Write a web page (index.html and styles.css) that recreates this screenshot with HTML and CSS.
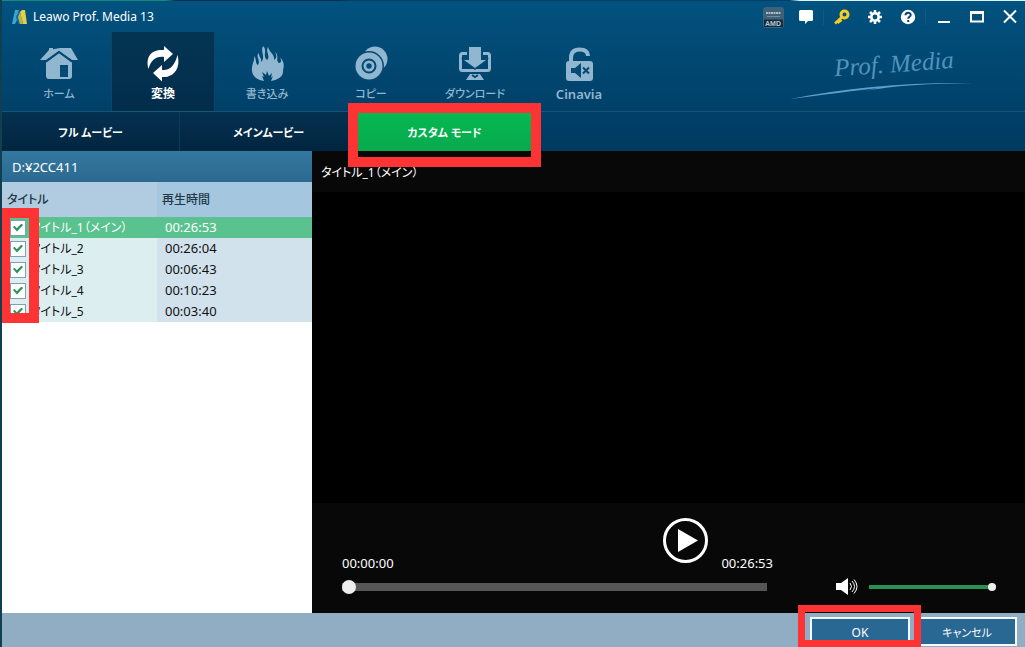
FILE: index.html
```html
<!DOCTYPE html>
<html lang="ja">
<head>
<meta charset="utf-8">
<title>Leawo Prof. Media 13</title>
<link rel="stylesheet" href="styles.css">
</head>
<body>
<div class="app">
  <header class="header">
    <div class="titlebar">
      <svg class="logo" width="16" height="16" viewBox="0 0 16 16" aria-hidden="true"><path d="M3 1h4v6L3 15H0z" fill="#39a6cf"/><path d="M7 1l3 9-2 5H6L4 8z" fill="#146a9c"/><path d="M8 3l2-2h3l2 14h-4z" fill="#e3cf45"/><path d="M8 3l3 12H8L6 8z" fill="#b5b84d"/></svg>
      <h1 class="app-name">Leawo Prof. Media 13</h1>
      <div class="tools">
        <svg class="gpu" width="21" height="21" viewBox="0 0 21 21" role="img" aria-label="AMD"><rect x=".5" y=".5" width="20" height="20" rx="2" fill="#294a61" stroke="#3d6379"/><path d="M1 1h19v11H1z" fill="#3f6075"/><path d="M3 6h15" stroke="#a9bcc8" stroke-width="2" stroke-dasharray="2 .5"/><path d="M4 9.500h13" stroke="#6f8fa1"/><path d="M1 13h19v7H1z" fill="#102b40"/><text x="2" y="19" class="gpu-text">AMD</text></svg>
        <button class="tool" aria-label="メッセージ"><svg width="16" height="16" viewBox="0 0 16 16"><path d="M2.500 1h11a1.500 1.500 0 0 1 1.500 1.500v8a1.500 1.500 0 0 1-1.500 1.500H10l-3 3v-3H2.500A1.500 1.500 0 0 1 1 10.500v-8A1.500 1.500 0 0 1 2.500 1z" fill="#fff"/></svg></button>
        <span class="divider"></span>
        <button class="tool" aria-label="登録"><svg width="16" height="16" viewBox="0 0 16 16"><g fill="none" stroke="#f4cf23"><circle cx="10.500" cy="5.500" r="3.500" stroke-width="3"/><path d="M8 8l-7 6.500M3.500 12l2 2M5.500 10.500l2 2" stroke-width="2.500"/></g></svg></button>
        <button class="tool" aria-label="設定"><svg width="16" height="16" viewBox="0 0 16 16"><g stroke="#fff" stroke-width="2.500"><path d="M8 1v3M8 12v3M1 8h3M12 8h3M3 3l2 2M11 11l2 2M13 3l-2 2M5 11l-2 2"/></g><circle cx="8" cy="8" r="3.700" fill="none" stroke="#fff" stroke-width="2.600"/></svg></button>
        <button class="tool" aria-label="ヘルプ"><svg width="16" height="16" viewBox="0 0 16 16"><circle cx="8" cy="8" r="7.200" fill="#fff"/><path d="M5.500 6.300C5.500 3 10.700 3 10.700 6c0 1.800-2.500 1.800-2.500 3.800" fill="none" stroke="#07466e" stroke-width="2"/><path d="M7.200 11h2v2h-2z" fill="#07466e"/></svg></button>
        <span class="divider"></span>
        <button class="tool" aria-label="最小化"><svg width="16" height="16" viewBox="0 0 16 16"><path d="M2 13h12" stroke="#fff" stroke-width="2"/></svg></button>
        <button class="tool" aria-label="最大化"><svg width="16" height="16" viewBox="0 0 16 16"><path d="M2 3.500h12v9H2z" fill="none" stroke="#fff" stroke-width="2"/><path d="M1 3.500h14" stroke="#fff" stroke-width="3"/></svg></button>
        <button class="tool" aria-label="閉じる"><svg width="16" height="16" viewBox="0 0 16 16"><path d="M2 1.500l12 12M14 1.500l-12 12" stroke="#fff" stroke-width="2"/></svg></button>
      </div>
    </div>

    <div class="main-bar">
      <nav class="main-nav">
        <a class="nav-item" href="#home"><svg width="40" height="36" viewBox="0 0 40 36"><path d="M1 14L10 4l11-2h11l7 12h-6L20 5 7 14z"/><path d="M10 2h4v6l-4 2z"/><path d="M20 7l13 9.500V30q0 3-3 3H10q-3 0-3-3V16.500z"/><path d="M7 15.500L20 6l13 9.500" fill="none" class="thin"/><path d="M21 19h8v12h-8z" class="hole"/></svg><span>ホーム</span></a>
        <a class="nav-item active" href="#convert" aria-current="page"><svg width="40" height="36" viewBox="0 0 40 36"><path d="M5.500 23C2 10 9 3 21 4V0l9 8-9 8v-5C13 10 8 14 5.500 23z"/><path d="M34.500 9C38 22 31 32 19 31v4.500L10 27l9-8v5C27 25 32 19 34.500 9z"/></svg><span>変換</span></a>
        <a class="nav-item" href="#burn"><svg width="40" height="36" viewBox="0 0 40 36"><path d="M16 0c5 5-1 9 4 14 4-4-2-8 1-13 1 5 7 7 6 13 3-2 3-4 1-8 5 4 0 8 4 11 3 0 2-4 1-6 6 7 3 10 3 15 0 5-6 8-12 9l2-5-2 2 1-5-3 3-2-5-1 4-4-3 2 5-2-1 2 5c-9-1-13-7-12-13 0-5 3-7 2-12 3 3 1 8 4 9 3-5-3-8 1-12 0 5 3 5 2 9 5-5-1-10 2-16z"/></svg><span>書き込み</span></a>
        <a class="nav-item" href="#copy"><svg width="40" height="36" viewBox="0 0 40 36"><circle cx="24" cy="13" r="12.500"/><circle cx="18" cy="20" r="15" class="hole"/><circle cx="18" cy="20" r="13.500"/><circle cx="18" cy="20" r="6.500" fill="none" class="ring"/><circle cx="18" cy="20" r="2.700" class="hole"/></svg><span>コピー</span></a>
        <a class="nav-item" href="#download"><svg width="40" height="36" viewBox="0 0 40 36"><rect x="5.500" y="7.500" width="29" height="17" rx="2" fill="none" class="frame"/><path d="M12 0h16v12h6L20 24 6 12h6z" class="hole"/><path d="M14 1h12v13h5L20 22 9 14h5z"/><path d="M15 28h10l4 6H11z"/><path d="M17 29l3 2 3-2" fill="none" class="thin"/></svg><span>ダウンロード</span></a>
        <a class="nav-item" href="#cinavia"><svg width="40" height="36" viewBox="0 0 40 36"><path d="M12 17V12q0-8.500 8.500-8.500T29 10" fill="none" class="shackle"/><rect x="7" y="15" width="27" height="20" rx="3"/><path d="M12 22h4l6-5v15l-6-5h-4z" class="hole"/><path d="M24 21.500l6 6M30 21.500l-6 6" class="cross"/></svg><span class="latin">Cinavia</span></a>
      </nav>
      <div class="brand">
        <span class="brand-name">Prof. Media</span>
        <svg class="swoosh" width="186" height="20" viewBox="0 0 186 20" aria-hidden="true"><path d="M1 18C60 6 120 1 184 2 130 3 100 5 65 12L90 7C60 10 35 14 1 18z" fill="#5b9fcf"/></svg>
      </div>
    </div>

    <nav class="mode-nav">
      <button class="mode">フル ムービー</button>
      <button class="mode">メインムービー</button>
      <div class="mode-wrap">
        <button class="mode selected" aria-pressed="true">カスタム モード</button>
        <span class="mark mark-mode"></span>
      </div>
    </nav>
  </header>

  <main class="content">
    <section class="list-pane">
      <h2 class="path">D:¥2CC411</h2>
      <div class="table-wrap">
        <table class="titles">
          <thead><tr><th>タイトル</th><th>再生時間</th></tr></thead>
          <tbody>
            <tr class="current"><td><label><input type="checkbox" checked>タイトル_1（メイン）</label></td><td>00:26:53</td></tr>
            <tr><td><label><input type="checkbox" checked>タイトル_2</label></td><td>00:26:04</td></tr>
            <tr><td><label><input type="checkbox" checked>タイトル_3</label></td><td>00:06:43</td></tr>
            <tr><td><label><input type="checkbox" checked>タイトル_4</label></td><td>00:10:23</td></tr>
            <tr><td><label><input type="checkbox" checked>タイトル_5</label></td><td>00:03:40</td></tr>
          </tbody>
        </table>
        <span class="mark mark-checks"></span>
      </div>
    </section>

    <section class="player">
      <h2 class="video-title">タイトル_1（メイン）</h2>
      <div class="video"></div>
      <div class="controls">
        <div class="timeline">
          <div class="times">
            <span class="time">00:00:00</span>
            <button class="play" aria-label="再生"><svg width="45" height="45" viewBox="0 0 45 45"><circle cx="22.500" cy="22.500" r="21" fill="none" stroke="#fff" stroke-width="3"/><path d="M15 11l20 11.500L15 34z" fill="#fff"/></svg></button>
            <span class="time">00:26:53</span>
          </div>
          <input class="seek" type="range" min="0" max="1613" value="0" aria-label="再生位置">
        </div>
        <div class="sound">
          <svg width="22" height="18" viewBox="0 0 22 18" aria-hidden="true"><path d="M0 5h5l7-5v17l-7-5H0z" fill="#fff"/><path d="M14 5q3 3.500 0 7M16 3q5 5.500 0 11M18 1.500q6 7 0 14" fill="none" stroke="#fff"/></svg>
          <input class="volume" type="range" min="0" max="100" value="100" aria-label="音量">
        </div>
      </div>
    </section>
  </main>

  <footer class="footer">
    <div class="ok-wrap">
      <button class="action">OK</button>
      <span class="mark mark-ok"></span>
    </div>
    <button class="action">キャンセル</button>
  </footer>
</div>
</body>
</html>
```
FILE: styles.css
```css
* { box-sizing: border-box; }

body {
  margin: 0;
  font-family: "Noto Sans", "Noto Sans CJK JP", sans-serif;
  font-size: 13px;
  line-height: 16px;
  font-feature-settings: "palt";
  background: #fff;
}

button {
  font: inherit;
  font-feature-settings: inherit;
  color: inherit;
  background: none;
  border: 0;
  padding: 0;
}

h1, h2 { margin: 0; font-size: 13px; font-weight: 400; }

.app {
  display: flex;
  flex-direction: column;
  min-height: 100vh;
  border-left: 2px solid #104050;
  overflow: hidden;
}

/* Header */
.header { color: #fff; background: linear-gradient(#02527f, #003a60); }

.titlebar {
  display: flex;
  align-items: center;
  height: 32px;
  padding: 2px 7px 0 10px;
  background: linear-gradient(90deg, #178a78 16%, #022f50 17% 33%, #033f63 34% 77%, #d7f6fb 78%) top / 100% 1px no-repeat;
  border-top: 0;
}
.app-name { margin-left: 5px; font-size: 12px; }
.tools { display: flex; align-items: center; margin-left: auto; }
.gpu { margin-right: 14px; }
.gpu-text { font: bold 7px "Liberation Sans", sans-serif; fill: #b9cbd8; }
.tool { display: flex; margin-right: 17px; }
.tool:last-child { margin-right: 0; }
.divider { width: 1px; height: 16px; margin: 0 10px 0 -8px; background: #1c5680; }

.main-bar { display: flex; justify-content: space-between; border-bottom: 1px solid #175476; }
.main-nav { display: flex; padding-left: 5px; }
.nav-item {
  display: flex;
  flex-direction: column;
  align-items: center;
  gap: 4px;
  width: 104px;
  height: 79px;
  padding-top: 14px;
  font-size: 11px;
  font-weight: 500;
  color: #91b6cf;
  text-decoration: none;
}
.nav-item svg { fill: #91b6cf; }
.nav-item.active { font-size: 12px; color: #fff; font-weight: 700; background: linear-gradient(#033553, #022d4b); border: solid #0b4568; border-width: 0 1px; }
.nav-item.active svg { fill: #fff; }
.nav-item .latin { font-size: 13px; font-weight: 600; }
.nav-item .hole { fill: #034a74; }
.ring { stroke: #034a74; stroke-width: 2; }
.frame { stroke: #91b6cf; stroke-width: 3; }
.thin { stroke: #034a74; stroke-width: 2; }
.shackle { stroke: #91b6cf; stroke-width: 4; }
.cross { stroke: #034a74; stroke-width: 2; }

.brand { display: flex; flex-direction: column; align-items: center; padding: 19px 50px 0 0; }
.brand-name {
  padding-left: 24px;
  font-family: "Liberation Serif", serif;
  font-size: 25px;
  line-height: 28px;
  font-style: italic;
  color: #5293bd;
  transform: rotate(-4deg);
}
.swoosh { margin-top: 2px; }

.mode-nav { display: flex; height: 39px; }
.mode {
  width: 178px;
  padding-top: 2px;
  font-size: 11px;
  font-weight: 700;
  background: linear-gradient(#043150, #022540);
  border-right: 1px solid #0b3d5d;
}
.mode-wrap { position: relative; display: flex; }
.mode.selected { width: 173px; background: linear-gradient(#05b950, #08a94e); border: 0; }

/* Highlight frames drawn over the window */
.mark { position: absolute; border: 10px solid #fe3334; pointer-events: none; }
.mark-mode { inset: -9px -10px -16px -10px; }
.mark-checks { top: 26px; left: -2px; width: 39px; height: 115px; }
.mark-ok { inset: -12px -11px -1px -12px; border-width: 7px; }

/* Title list */
.content { display: flex; flex: 1; }
.list-pane { width: 310px; background: #fff; }
.path { padding: 8px 10px 7px; color: #fff; background: linear-gradient(#34789f, #2c6990); }
.table-wrap { position: relative; }
.titles { width: 100%; border-collapse: collapse; table-layout: fixed; color: #111; }
.titles th { height: 35px; padding: 0 5px; text-align: left; font-size: 12px; font-weight: 500; color: #223847; background: #a4c7df; }
.titles th:first-child { background: #b1cce1; }
.titles td { height: 21px; padding: 0 8px 2px; background: #d2e2ed; }
.titles td:first-child { padding-bottom: 0; background: #dceeef; font-size: 12px; white-space: nowrap; }
.titles .current td, .titles .current td:first-child { color: #fff; background: #59c28e; }
.titles label { display: flex; align-items: center; gap: 4px; }
.titles input {
  appearance: none;
  display: grid;
  place-items: center;
  width: 16px;
  height: 16px;
  margin: 0;
  border: 1px solid #7d9fba;
  background: #fff;
}
.titles input:checked::before {
  content: "";
  width: 10px;
  height: 8px;
  background: #28955a;
  clip-path: polygon(0 45%, 15% 28%, 38% 58%, 85% 0, 100% 18%, 40% 100%);
}

/* Player */
.player { display: flex; flex: 1; flex-direction: column; color: #fff; background: #080808; }
.video-title { padding: 14px 9px 11px; font-size: 12px; }
.video { flex: 1; background: #000; }
.controls { display: flex; align-items: flex-end; gap: 63px; padding: 15px 29px 19px 30px; }
.timeline { display: flex; flex: 1; flex-direction: column; gap: 9px; }
.times { display: flex; align-items: flex-end; gap: 13px; height: 53px; }
.play { display: flex; align-self: flex-start; margin-left: auto; }
.sound { display: flex; align-items: center; gap: 11px; height: 14px; }

input[type="range"] { appearance: none; margin: 0; background: transparent; }
.seek { width: calc(100% - 6px); height: 14px; }
.seek::-webkit-slider-runnable-track { height: 8px; background: #565656; }
.seek::-webkit-slider-thumb { appearance: none; width: 14px; height: 14px; margin-top: -3px; border-radius: 50%; background: #ededed; }
.volume { width: 127px; height: 8px; }
.volume::-webkit-slider-runnable-track { height: 4px; background: #2a9156; }
.volume::-webkit-slider-thumb { appearance: none; width: 8px; height: 8px; margin-top: -2px; border-radius: 50%; background: #ededed; }

/* Footer */
.footer { display: flex; justify-content: flex-end; gap: 7px; padding: 4px 8px 1px; background: #90adc4; }
.ok-wrap { position: relative; display: flex; }
.action {
  width: 100px;
  height: 29px;
  padding-top: 2px;
  font-size: 11px;
  color: #fff;
  background: #2a6894;
  border: 2px solid #f3fbff;
}
.ok-wrap .action { font-size: 12px; }
```
